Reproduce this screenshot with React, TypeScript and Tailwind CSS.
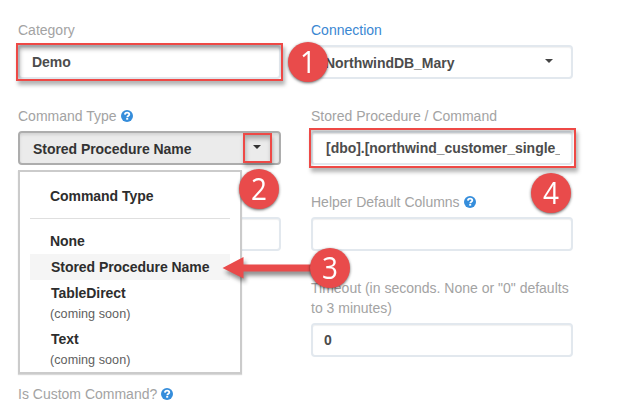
import type { ReactNode } from 'react';

function Help() {
  return (
    <svg width="12" height="12" viewBox="0 0 12 12" className="ml-1 inline-block align-[-1px]">
      <circle cx="6" cy="6" r="6" fill="#358ddb" />
      <path d="M3.9 4.6C4 3.2 4.8 2.7 6.1 2.7C7.5 2.7 8.3 3.4 8.3 4.4C8.3 5.8 6.4 5.7 6.3 7.2" fill="none" stroke="#fff" strokeWidth="1.8" />
      <rect x="5.2" y="8" width="2" height="1.7" fill="#fff" />
    </svg>
  );
}

function Field({ label, children, blue = false }: { label: ReactNode; children?: ReactNode; blue?: boolean }) {
  return (
    <div className="mb-[27px]">
      <div className={blue ? 'mb-[5px] min-h-5 leading-5 text-[#3a87d2]' : 'mb-[5px] min-h-5 leading-5 text-[#a3a3a3]'}>{label}</div>
      {children}
    </div>
  );
}

function Box({ children }: { children?: ReactNode }) {
  return (
    <div className="flex h-[34px] items-center rounded-[4px] border-2 border-[#e2e8ee] bg-white px-3 font-bold tracking-[-0.03px] whitespace-nowrap text-[#4c4c4c] shadow-[inset_0_1px_1px_rgba(0,0,0,0.06)]">
      {children}
    </div>
  );
}

function Badge({ n, pos }: { n: string; pos: string }) {
  return (
    <div className={`absolute flex h-10 w-10 items-center justify-center rounded-full bg-[#e94b4b] font-['Open_Sans',sans-serif] text-[31px] leading-none text-white shadow-[0_1px_3px_rgba(0,0,0,0.6)] ${pos}`}>
      <span className="-mt-0.5 scale-x-90">{n}</span>
    </div>
  );
}

function Frame({ pos }: { pos: string }) {
  return <div className={`absolute border-2 border-[#ee4946] ${pos}`} />;
}

export default function App() {
  return (
    <div className="relative h-[416px] w-[629px] overflow-hidden bg-white font-['Liberation_Sans',Arial,sans-serif] text-[14px]">
      <div className="flex gap-[30px] pt-5 pl-[18px]">
        <div className="w-[263px]">
          <Field label="Category"><Box><span>Demo</span></Box></Field>
          <Field label={<>Command Type<Help /></>}>
            <div className="flex h-[34px] items-center rounded-[4px] border-2 border-[#adadad] bg-[#ebebeb] pr-[18px] pl-[13px] font-bold tracking-[-0.05px] text-[#333] shadow-[inset_0_2px_3px_rgba(0,0,0,0.1)]">
              <span className="mt-0.5">Stored Procedure Name</span>
              <span className="mb-0.5 ml-auto h-0 w-0 border-x-4 border-t-4 border-x-transparent border-t-current" />
            </div>
          </Field>
          <Field label={null}><Box /></Field>
          <div className="mt-[133px] leading-5 text-[#a3a3a3]">Is Custom Command?<Help /></div>
        </div>
        <div className="w-[262px]">
          <Field label="Connection" blue>
            <Box>
              <span className="mt-0.5">NorthwindDB_Mary</span>
              <span className="mr-1.5 mb-0.5 ml-auto h-0 w-0 border-x-4 border-t-4 border-x-transparent border-t-[#444]" />
            </Box>
          </Field>
          <Field label="Stored Procedure / Command">
            <Box><span className="ml-px w-[234px] shrink-0 overflow-hidden">[dbo].[northwind_customer_single_</span></Box>
          </Field>
          <Field label={<>Helper Default Columns<Help /></>}><Box /></Field>
          <Field label={<>Timeout (in seconds. None or "0" defaults<br />to 3 minutes)</>}>
            <Box><span className="-ml-px">0</span></Box>
          </Field>
        </div>
      </div>

      <div className="absolute top-[170px] left-[18px] h-[204px] w-[224px] border-2 border-[#cbcbcb] bg-white px-[10px] font-bold tracking-[-0.05px] text-[#2d2d2d] shadow-[0_1px_1px_rgba(0,0,0,0.15)]">
        <div className="mt-3.5 pl-5 leading-5">Command Type</div>
        <div className="mt-3 h-px bg-[#dfdfdf]" />
        <div className="mt-[9px] h-[26px] pl-5 leading-[26px]">None</div>
        <div className="h-[26px] bg-[#f5f5f5] pl-[21px] leading-[26px]">Stored Procedure Name</div>
        <div className="h-[26px] pl-[21px] leading-[26px]">TableDirect</div>
        <div className="h-5 pl-5 text-[12.6px] leading-[17px] font-normal tracking-[0.05px] text-[#606060]">(coming soon)</div>
        <div className="h-[26px] pl-[21px] leading-[26px]">Text</div>
        <div className="h-4 pl-5 text-[12.6px] leading-[17px] font-normal tracking-[0.05px] text-[#606060]">(coming soon)</div>
      </div>

      <Frame pos="top-[43px] left-4 h-[38px] w-[267px] shadow-[2px_4px_4px_rgba(0,0,0,0.3),inset_2px_4px_4px_rgba(0,0,0,0.3)]" />
      <Frame pos="top-[133px] left-[243px] h-[30px] w-[29px] shadow-[1px_4px_4px_rgba(0,0,0,0.25),inset_1px_4px_4px_rgba(0,0,0,0.25)]" />
      <Frame pos="top-32 left-[309px] h-10 w-[267px] shadow-[2px_4px_4px_rgba(0,0,0,0.3),inset_1px_3px_3px_rgba(0,0,0,0.2)]" />
      <svg className="absolute top-[250px] left-[215px] drop-shadow-[2px_4px_2px_rgba(0,0,0,0.45)]" width="110" height="40" viewBox="0 0 110 40">
        <path d="M7.5 18L28.5 7V14.5H106V21.5H28.5V28.5Z" fill="#e94b4b" />
      </svg>
      <Badge n="1" pos="top-[42px] left-[288px]" />
      <Badge n="2" pos="top-[169px] left-[239px]" />
      <Badge n="3" pos="top-[248px] left-[310px]" />
      <Badge n="4" pos="top-[173px] left-[531px]" />
    </div>
  );
}
